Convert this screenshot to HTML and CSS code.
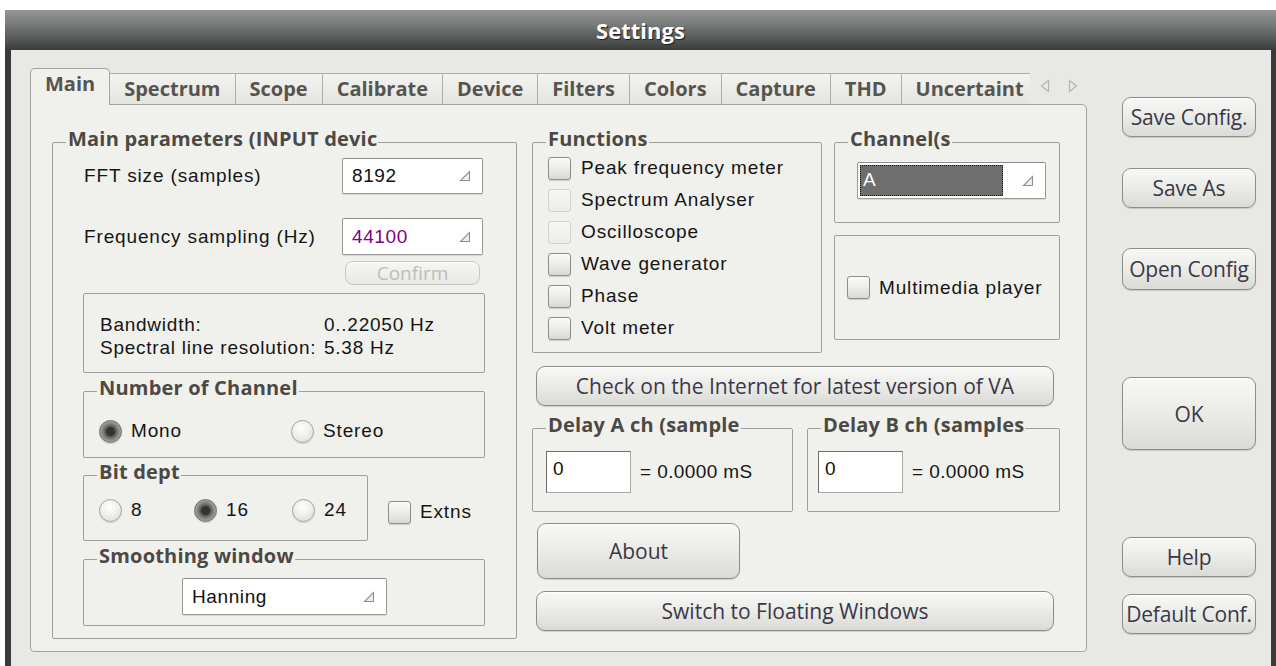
FILE: index.html
```html
<!DOCTYPE html>
<html>
<head>
<meta charset="utf-8">
<title>Settings</title>
<link rel="stylesheet" href="styles.css">
</head>
<body>
<div class="window">
  <div class="titlebar">Settings</div>
  <div class="client">
    <div class="tabwidget">
      <div class="tabbar">
        <div class="tabs">
          <div class="tab active">Main</div>
          <div class="tab">Spectrum</div>
          <div class="tab">Scope</div>
          <div class="tab">Calibrate</div>
          <div class="tab">Device</div>
          <div class="tab">Filters</div>
          <div class="tab">Colors</div>
          <div class="tab">Capture</div>
          <div class="tab">THD</div>
          <div class="tab">Uncertaint</div>
        </div>
        <div class="tab-scroll">
          <svg viewBox="0 0 10 14"><path d="M8.5 1.5 L1.5 7 L8.5 12.5 Z"/></svg>
          <svg viewBox="0 0 10 14"><path d="M1.5 1.5 L8.5 7 L1.5 12.5 Z"/></svg>
        </div>
      </div>

      <div class="pane">
        <fieldset class="group main-group">
          <legend>Main parameters (INPUT devic</legend>

          <div class="param-row fft-row">
            <span class="lbl">FFT size (samples)</span>
            <div class="combo"><span class="val">8192</span><svg class="combo-arrow" viewBox="0 0 12 12"><path d="M1.5 10.5 L10.5 10.5 L10.5 1.5 Z"/></svg></div>
          </div>
          <div class="param-row fs-row">
            <span class="lbl">Frequency sampling (Hz)</span>
            <div class="combo"><span class="val purple">44100</span><svg class="combo-arrow" viewBox="0 0 12 12"><path d="M1.5 10.5 L10.5 10.5 L10.5 1.5 Z"/></svg></div>
          </div>
          <div class="btn disabled confirm">Confirm</div>

          <div class="info-box">
            <span class="lbl">Bandwidth:</span><span class="lbl">0..22050 Hz</span>
            <span class="lbl">Spectral line resolution:</span><span class="lbl">5.38 Hz</span>
          </div>

          <fieldset class="group channels">
            <legend>Number of Channel</legend>
            <div class="radio-row">
              <label class="opt w-mono"><span class="radio checked"></span><span class="lbl">Mono</span></label>
              <label class="opt"><span class="radio"></span><span class="lbl">Stereo</span></label>
            </div>
          </fieldset>

          <div class="bit-row">
            <fieldset class="group bits">
              <legend>Bit dept</legend>
              <div class="radio-row bits-radios">
                <label class="opt w-b8"><span class="radio"></span><span class="lbl">8</span></label>
                <label class="opt w-b16"><span class="radio checked"></span><span class="lbl">16</span></label>
                <label class="opt"><span class="radio"></span><span class="lbl">24</span></label>
              </div>
            </fieldset>
            <label class="opt extns"><span class="check"></span><span class="lbl">Extns</span></label>
          </div>

          <fieldset class="group smoothing">
            <legend>Smoothing window</legend>
            <div class="combo hanning"><span class="val">Hanning</span><svg class="combo-arrow" viewBox="0 0 12 12"><path d="M1.5 10.5 L10.5 10.5 L10.5 1.5 Z"/></svg></div>
          </fieldset>
        </fieldset>

        <div class="middle">
          <div class="top-row">
            <fieldset class="group functions">
              <legend>Functions</legend>
              <div class="func-list">
                <label class="opt func"><span class="check"></span><span class="lbl">Peak frequency meter</span></label>
                <label class="opt func"><span class="check off"></span><span class="lbl">Spectrum Analyser</span></label>
                <label class="opt func"><span class="check off"></span><span class="lbl">Oscilloscope</span></label>
                <label class="opt func"><span class="check"></span><span class="lbl">Wave generator</span></label>
                <label class="opt func"><span class="check"></span><span class="lbl">Phase</span></label>
                <label class="opt func"><span class="check"></span><span class="lbl">Volt meter</span></label>
              </div>
            </fieldset>
            <div class="side-stack">
              <fieldset class="group chan">
                <legend>Channel(s</legend>
                <div class="combo chan-combo"><span class="sel">A</span><svg class="combo-arrow" viewBox="0 0 12 12"><path d="M1.5 10.5 L10.5 10.5 L10.5 1.5 Z"/></svg></div>
              </fieldset>
              <div class="mm-box">
                <label class="opt"><span class="check"></span><span class="lbl">Multimedia player</span></label>
              </div>
            </div>
          </div>

          <div class="btn wide check-btn">Check on the Internet for latest version of VA</div>

          <div class="delay-row">
            <fieldset class="group delay delay-a">
              <legend>Delay A ch (sample</legend>
              <div class="delay-line">
                <div class="input"><span class="val">0</span></div>
                <span class="lbl">= 0.0000 mS</span>
              </div>
            </fieldset>
            <fieldset class="group delay delay-b">
              <legend>Delay B ch (samples</legend>
              <div class="delay-line">
                <div class="input"><span class="val">0</span></div>
                <span class="lbl">= 0.0000 mS</span>
              </div>
            </fieldset>
          </div>

          <div class="btn about">About</div>
          <div class="btn wide switch-btn">Switch to Floating Windows</div>
        </div>
      </div>
    </div>

    <div class="side">
      <div class="btn side-btn save-config">Save Config.</div>
      <div class="btn side-btn save-as">Save As</div>
      <div class="btn side-btn open-config">Open Config</div>
      <div class="btn side-btn ok">OK</div>
      <div class="btn side-btn help">Help</div>
      <div class="btn side-btn default-conf">Default Conf.</div>
    </div>
  </div>
</div>
</body>
</html>
```

FILE: styles.css
```css
* { box-sizing: border-box; }
html, body { margin: 0; padding: 0; }
body {
  width: 1276px;
  height: 666px;
  overflow: hidden;
  background: #ffffff;
  font-family: "Liberation Sans", Arial, sans-serif;
}

/* ---------- window frame ---------- */
.window {
  margin: 10px 0 0 5px;
  height: 656px;
  background: #3a3a3a;
  display: flex;
  flex-direction: column;
}
.titlebar {
  flex: none;
  height: 40px;
  background: linear-gradient(#949696 0%, #7e8080 30%, #575858 72%, #3b3b3b 100%);
  color: #ffffff;
  font: 700 22px/40px "Open Sans", sans-serif;
  text-align: center;
  text-shadow: 1px 1px 1px #1c1c1c;
}
.client {
  flex: 1;
  margin: 0 5px 0 6px;
  background: #e8e8e5;
  display: flex;
  align-items: flex-start;
}

/* ---------- tab widget ---------- */
.tabwidget {
  margin: 18px 0 0 19px;
  width: 1057px;
  display: flex;
  flex-direction: column;
}
.tabbar {
  height: 37px;
  margin-bottom: -1px;
  position: relative;
  z-index: 1;
  display: flex;
}
.tabs {
  width: 1000px;
  height: 37px;
  flex: none;
  display: flex;
  align-items: flex-start;
  overflow: hidden;
}
.tab {
  flex: none;
  margin-top: 5px;
  height: 31px;
  padding: 0 14px;
  border: 1px solid #adada9;
  border-left: 0;
  border-bottom: 0;
  background: linear-gradient(#f3f3f0, #e4e4e0);
  font: 700 20px/29px "Open Sans", sans-serif;
  color: #57544f;
  white-space: nowrap;
}
.tab.active {
  margin-top: 0;
  height: 37px;
  border-left: 1px solid #a5a5a1;
  border-color: #a5a5a1;
  border-radius: 5px 5px 0 0;
  background: #f0f0ec;
  line-height: 30px;
  padding: 0 14px;
}
.tab-scroll {
  display: flex;
  gap: 18px;
  padding: 11px 0 0 10px;
}
.tab-scroll svg {
  width: 10px;
  height: 14px;
}
.tab-scroll path {
  fill: none;
  stroke: #b4b4b0;
  stroke-width: 1.2;
}

.pane {
  height: 548px;
  background: #f0f0ec;
  border: 1px solid #a2a29e;
  border-radius: 0 5px 4px 4px;
  display: flex;
  align-items: flex-start;
  padding: 24px 0 0 21px;
}

/* ---------- group boxes ---------- */
.group {
  margin: 0;
  padding: 0;
  min-width: 0;
  border: 1px solid #9f9f9c;
  border-radius: 2px;
}
.group > legend {
  margin-left: 13px;
  padding: 0 1px 6px 2px;
  font: 700 20px/20px "Open Sans", sans-serif;
  letter-spacing: 0.2px;
  color: #4c4944;
  white-space: nowrap;
}

.lbl {
  font-size: 19px;
  letter-spacing: 0.85px;
  color: #151515;
  white-space: nowrap;
}

/* ---------- main parameters ---------- */
.main-group {
  flex: none;
  width: 465px;
  height: 510px;
}
.param-row {
  display: flex;
  align-items: center;
  justify-content: space-between;
  padding: 0 33px 0 31px;
}
.fft-row { margin-top: 3px; height: 36px; }
.fs-row { margin-top: 24px; height: 37px; }

.combo {
  display: flex;
  align-items: center;
  width: 141px;
  height: 100%;
  background: #ffffff;
  border: 1px solid #9a9a97;
  border-top-color: #8a8a87;
  border-radius: 2px;
  box-shadow: 0 1px 1px rgba(0,0,0,0.12);
  padding: 0 0 0 9px;
}
.combo .val {
  flex: 1;
  font-size: 19px;
  letter-spacing: 0.6px;
  color: #111;
}
.combo .val.purple { color: #800080; }
.combo-arrow {
  flex: none;
  width: 12px;
  height: 12px;
  margin-right: 11px;
}
.combo-arrow path {
  fill: #eeeeec;
  stroke: #8e8e8b;
  stroke-width: 1.1;
}

.btn {
  display: flex;
  align-items: center;
  justify-content: center;
  border: 1px solid #8d8d8a;
  border-radius: 9px;
  background: linear-gradient(#f8f8f6, #e9e9e6 55%, #dadad6);
  box-shadow: inset 0 1px 0 #ffffff, 0 1px 1px rgba(0,0,0,0.15);
  font: 400 21px "Open Sans", sans-serif;
  color: #393848;
  white-space: nowrap;
}
.btn.disabled {
  border-color: #c6c6c2;
  color: #bdbdba;
  box-shadow: inset 0 1px 0 #ffffff;
  background: linear-gradient(#f6f6f4, #e8e8e5);
}
.confirm {
  margin: 6px 36px 0 auto;
  width: 135px;
  height: 24px;
  font-size: 19px;
  border-radius: 8px;
}

.info-box {
  margin: 8px 31px 0 30px;
  height: 80px;
  border: 1px solid #9f9f9c;
  border-radius: 2px;
  padding: 19px 0 0 16px;
  display: grid;
  grid-template-columns: 224px auto;
  align-content: start;
  line-height: 23px;
}
.info-box .lbl { letter-spacing: 0.75px; }

.channels {
  margin: 5px 31px 0 30px;
  height: 80px;
}
.radio-row {
  display: flex;
  margin-top: 15px;
  padding-left: 15px;
}
.opt {
  display: flex;
  align-items: center;
  gap: 9px;
  height: 24px;
}
.w-mono { width: 192px; }

.radio {
  flex: none;
  width: 23px;
  height: 23px;
  border-radius: 50%;
  border: 1px solid #a3a3a0;
  background: radial-gradient(circle at 45% 35%, #ffffff 0%, #f1f1ef 40%, #d8d8d4 100%);
  box-shadow: 0 1px 1px rgba(0,0,0,0.12);
}
.radio.checked {
  border-color: #6f6f6d;
  background: radial-gradient(circle, #333333 0 4px, #575757 5px, #858585 8px, #a6a6a4 11px);
}

.check {
  flex: none;
  width: 23px;
  height: 23px;
  border-radius: 3px;
  border: 1px solid #8e8e8b;
  background: linear-gradient(#fbfbfa, #ececea 50%, #d8d8d4);
  box-shadow: 0 1px 1px rgba(0,0,0,0.15);
}
.check.off {
  border-color: #d2d2ce;
  background: linear-gradient(#f7f7f5, #ececea);
  box-shadow: none;
}

.bit-row {
  display: flex;
  align-items: flex-start;
  margin: 4px 0 0 30px;
}
.bits {
  flex: none;
  width: 285px;
  height: 79px;
}
.bits-radios { margin-top: 10px; }
.w-b8 { width: 95px; }
.w-b16 { width: 98px; }
.extns {
  margin: 38px 0 0 20px;
}

.smoothing {
  margin: 5px 31px 0 30px;
  height: 80px;
}
.hanning {
  margin: 6px 0 0 98px;
  width: 205px;
  height: 37px;
}

/* ---------- middle column ---------- */
.middle {
  flex: none;
  width: 528px;
  margin-left: 15px;
  display: flex;
  flex-direction: column;
}
.top-row {
  display: flex;
  gap: 12px;
}
.functions {
  flex: none;
  width: 290px;
  height: 224px;
}
.func-list {
  margin-top: -3px;
  padding-left: 15px;
  display: flex;
  flex-direction: column;
}
.func {
  height: 32px;
  gap: 10px;
}
.side-stack {
  width: 226px;
  display: flex;
  flex-direction: column;
}
.chan { height: 94px; }
.chan-combo {
  margin: 7px 0 0 22px;
  width: 189px;
  height: 37px;
  padding-left: 2px;
}
.chan-combo .sel {
  flex: 1;
  height: 31px;
  margin-right: 19px;
  background: #6e6e6e;
  border: 1px dotted #111;
  color: #ffffff;
  font-size: 19px;
  line-height: 28px;
  padding-left: 2px;
}
.mm-box {
  margin-top: 12px;
  height: 105px;
  border: 1px solid #9f9f9c;
  border-radius: 2px;
  display: flex;
  align-items: center;
  padding-left: 12px;
}

.wide {
  width: 518px;
  margin-left: 4px;
}
.check-btn {
  margin-top: 13px;
  height: 40px;
}
.delay-row {
  display: flex;
  gap: 14px;
  margin-top: 9px;
}
.delay { height: 97px; }
.delay-a { width: 261px; }
.delay-b { width: 253px; }
.delay-line {
  display: flex;
  align-items: center;
  gap: 9px;
  margin-top: 10px;
  padding-left: 13px;
}
.delay-b .delay-line { padding-left: 10px; }
.delay-line .lbl { letter-spacing: 0.4px; }
.input {
  width: 85px;
  height: 42px;
  background: #ffffff;
  border: 1px solid #6d6d6b;
  border-right-color: #a8a8a5;
  border-bottom-color: #a8a8a5;
  padding: 6px 0 0 6px;
}
.input .val {
  font-size: 19px;
  color: #111;
}
.about {
  margin: 11px 0 0 5px;
  width: 203px;
  height: 56px;
}
.switch-btn {
  margin-top: 12px;
  height: 40px;
}

/* ---------- right button column ---------- */
.side {
  flex: none;
  margin-left: 35px;
  width: 134px;
  padding-top: 47px;
  display: flex;
  flex-direction: column;
}
.side-btn {
  height: 40px;
  font-size: 21px;
  letter-spacing: -0.2px;
}
.save-as { margin-top: 31px; }
.open-config { margin-top: 40px; height: 42px; }
.ok { margin-top: 87px; height: 73px; }
.help { margin-top: 87px; }
.default-conf { margin-top: 17px; }
```
